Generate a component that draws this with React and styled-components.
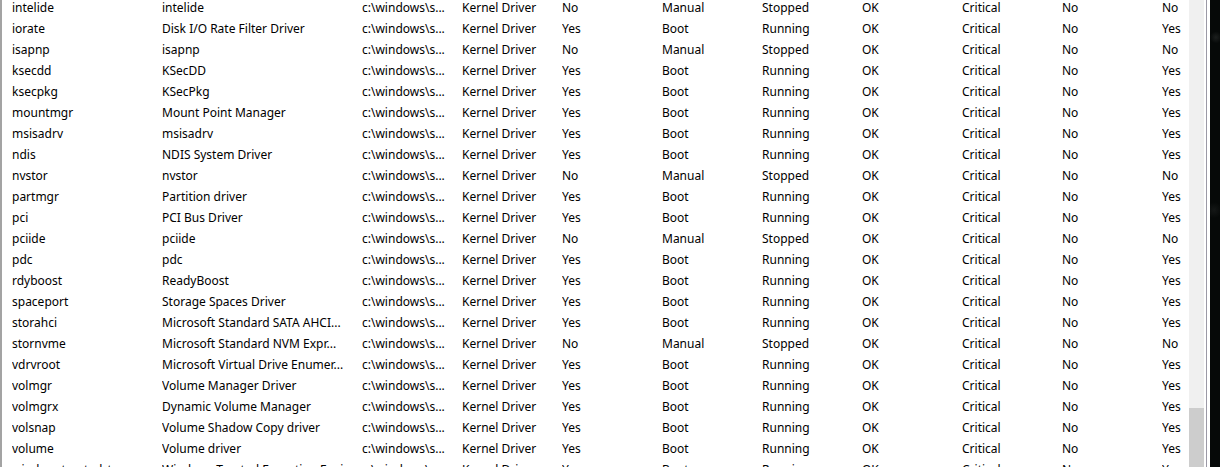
import styled, { createGlobalStyle } from 'styled-components';

const GlobalStyle = createGlobalStyle`
  html, body {
    margin: 0;
    padding: 0;
    height: 100%;
    overflow: hidden;
    background: #ffffff;
  }
  #root {
    height: 100%;
  }
`;

const Window = styled.div`
  display: flex;
  height: 100vh;
  overflow: hidden;
  font-family: "Noto Sans", "Open Sans", sans-serif;
  font-size: 12px;
  color: #000000;
`;

const ListPane = styled.div`
  flex: 1;
  min-width: 0;
  background: #ffffff;
  border-left: 2px solid #a3a3a3;
  overflow: hidden;
`;

const Rows = styled.div`
  margin-top: -3px;
  padding-left: 10px;
`;

const Row = styled.div`
  display: grid;
  grid-template-columns: 150px 200px repeat(8, 100px) 1fr;
  height: 21px;
  align-items: center;
`;

const Cell = styled.div`
  white-space: nowrap;
  overflow: hidden;
  line-height: 21px;
`;

const ScrollBar = styled.div`
  flex: none;
  width: 15px;
  display: flex;
  flex-direction: column;
  justify-content: flex-end;
  background: #f0f0f0;
`;

const Thumb = styled.div`
  height: ${({ $size }) => $size}px;
  background: #cdcdcd;
`;

const FrameEdge = styled.div`
  flex: none;
  width: 6px;
  background: linear-gradient(
    to right,
    #ffffff 0 2px,
    #9b99a6 2px 3px,
    #ffffff 3px 6px
  );
`;

const Desktop = styled.div`
  flex: none;
  width: 10px;
  background:
    radial-gradient(circle at 60% 8%, #1c1f1e 0, transparent 6px),
    radial-gradient(circle at 40% 45%, #141716 0, transparent 8px),
    #060908;
`;

const PATH = 'c:\\windows\\s...';

// name, display name, boot start
const drivers = [
  ['intelide', 'intelide', false],
  ['iorate', 'Disk I/O Rate Filter Driver', true],
  ['isapnp', 'isapnp', false],
  ['ksecdd', 'KSecDD', true],
  ['ksecpkg', 'KSecPkg', true],
  ['mountmgr', 'Mount Point Manager', true],
  ['msisadrv', 'msisadrv', true],
  ['ndis', 'NDIS System Driver', true],
  ['nvstor', 'nvstor', false],
  ['partmgr', 'Partition driver', true],
  ['pci', 'PCI Bus Driver', true],
  ['pciide', 'pciide', false],
  ['pdc', 'pdc', true],
  ['rdyboost', 'ReadyBoost', true],
  ['spaceport', 'Storage Spaces Driver', true],
  ['storahci', 'Microsoft Standard SATA AHCI...', true],
  ['stornvme', 'Microsoft Standard NVM Expr...', false],
  ['vdrvroot', 'Microsoft Virtual Drive Enumer...', true],
  ['volmgr', 'Volume Manager Driver', true],
  ['volmgrx', 'Dynamic Volume Manager', true],
  ['volsnap', 'Volume Shadow Copy driver', true],
  ['volume', 'Volume driver', true],
  ['windowstrustedrt', 'Windows Trusted Execution Enviro...', true],
];

const toCells = ([name, display, boot]) => [
  name,
  display,
  PATH,
  'Kernel Driver',
  boot ? 'Yes' : 'No',
  boot ? 'Boot' : 'Manual',
  boot ? 'Running' : 'Stopped',
  'OK',
  'Critical',
  'No',
  boot ? 'Yes' : 'No',
];

const App = () => (
  <>
    <GlobalStyle />
    <Window>
      <ListPane>
        <Rows>
          {drivers.map((d) => (
            <Row key={d[0]}>
              {toCells(d).map((value, i) => (
                <Cell key={i}>{value}</Cell>
              ))}
            </Row>
          ))}
        </Rows>
      </ListPane>
      <ScrollBar>
        <Thumb $size={59} />
      </ScrollBar>
      <FrameEdge />
      <Desktop />
    </Window>
  </>
);

export default App;
